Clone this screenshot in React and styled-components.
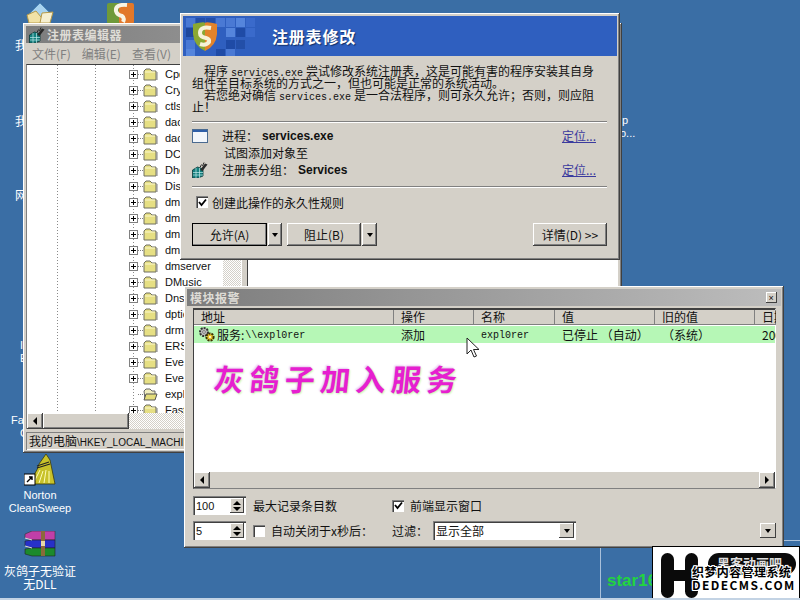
import React from "react";
import styled, { createGlobalStyle } from "styled-components";

const GlobalStyle = createGlobalStyle`
  html, body { margin: 0; padding: 0; background: #3a6ea5; }
  * { box-sizing: border-box; }
  body { font-family: "Noto Sans CJK SC", "Liberation Sans", sans-serif; font-size: 12px; }
`;

const cjk = `"Noto Sans CJK SC", "Liberation Sans", sans-serif`;
const mono = `"Liberation Mono", "Noto Sans CJK SC", monospace`;
const bevelUp = `inset -1px -1px 0 #404040, inset 1px 1px 0 #fff, inset -2px -2px 0 #808080, inset 2px 2px 0 #d4d0c8`;
const hatch = `repeating-conic-gradient(#fff 0 25%, #d4d0c8 0 50%) 0 0 / 2px 2px`;

const treeItems = [
  "Cpqarray", "Crypt32Log", "ctlsx", "dac960nt", "dac2w2k", "DCOM", "Dhcp", "Disk", "dmadmin", "dmboot", "dmio",
  "dmload", "dmserver", "DMusic", "Dnscache", "dptioscsi", "drmkaud", "ERSvc", "EventLog", "EventSystem", "expl0rer", "FastFat",
];

const columns = [
  { title: "地址", width: 200 },
  { title: "操作", width: 80 },
  { title: "名称", width: 81 },
  { title: "值", width: 100 },
  { title: "旧的值", width: 100 },
  { title: "日期", width: 21 },
];

const Desktop = styled.div`
  position: relative;
  width: 800px;
  height: 600px;
  overflow: hidden;
  background: #3a6ea5;
  border-bottom: 2px solid #c3d3e4;
`;

const Spot = styled.div`
  position: absolute;
  left: ${(p) => p.$x}px;
  top: ${(p) => p.$y}px;
`;

const IconLabel = styled.div`
  position: absolute;
  left: ${(p) => p.$x}px;
  top: ${(p) => p.$y}px;
  width: ${(p) => p.$w || 80}px;
  color: #fff;
  font-family: ${(p) => (p.$cjk ? cjk : `"Liberation Sans", "Noto Sans CJK SC", sans-serif`)};
  font-size: ${(p) => (p.$cjk ? 12 : 11)}px;
  line-height: 13px;
  text-align: ${(p) => (p.$center ? "center" : "left")};
  white-space: nowrap;
`;

const StarPanel = styled.div`
  position: absolute;
  left: 600px;
  top: 540px;
  width: 200px;
  height: 60px;
  border-top: 1px solid #a9c0da;
  border-left: 1px solid #a9c0da;
  padding: 30px 0 0 6px;
  color: #22d43f;
  font: bold 17px "Liberation Sans", sans-serif;
`;

const Win = styled.div`
  position: absolute;
  left: ${(p) => p.$x}px;
  top: ${(p) => p.$y}px;
  width: ${(p) => p.$w}px;
  height: ${(p) => p.$h}px;
  padding: 3px;
  display: flex;
  flex-direction: column;
  background: #d4d0c8;
  box-shadow: ${bevelUp};
`;

const TitleBar = styled.div`
  height: 17px;
  flex: none;
  display: flex;
  align-items: center;
  gap: 2px;
  padding: 0 2px 0 3px;
  background: linear-gradient(to right, #7d7d7d, #bdbdbd);
  color: #dedcd6;
  font-weight: 700;
  font-size: 12px;
  line-height: 15px;
  letter-spacing: 0.5px;
`;

const CloseBtn = styled.div`
  margin-left: auto;
  margin-right: 2px;
  width: 11px;
  height: 11px;
  display: flex;
  align-items: center;
  justify-content: center;
  background: #d4d0c8;
  box-shadow: inset -1px -1px 0 #404040, inset 1px 1px 0 #fff;
  color: #111;
  font: 9px/10px "Liberation Sans", sans-serif;
`;

const Menu = styled.div`
  height: 21px;
  flex: none;
  display: flex;
  align-items: center;
  gap: 11px;
  padding-left: 6px;
  color: #808080;
`;

const Panes = styled.div`
  height: 365px;
  flex: none;
  display: flex;
  gap: 5px;
  padding-right: 1px;
`;

const TreePane = styled.div`
  width: 216px;
  display: flex;
  flex-direction: column;
  border-top: 1px solid #404040;
  border-left: 1px solid #808080;
`;

const TreeBody = styled.div`
  flex: 1;
  min-height: 0;
  display: flex;
`;

const TreeView = styled.div`
  flex: 1;
  min-width: 0;
  overflow: hidden;
  padding-top: 1px;
  background-color: #fff;
  background-image:
    repeating-linear-gradient(to bottom, #8a8a8a 0 1px, transparent 1px 3px),
    repeating-linear-gradient(to bottom, #8a8a8a 0 1px, transparent 1px 3px),
    repeating-linear-gradient(to bottom, #8a8a8a 0 1px, transparent 1px 3px);
  background-size: 1px 100%;
  background-position: 30px 0, 68px 0, 106px 0;
  background-repeat: no-repeat;
`;

const TreeRow = styled.div`
  height: 16px;
  display: flex;
  align-items: center;
  padding-left: 102px;
  color: #111;
  font: 11px/16px "Liberation Sans", sans-serif;
  white-space: nowrap;
`;

const Expander = styled.span`
  width: 9px;
  height: 9px;
  flex: none;
  position: relative;
  background: #fff;
  border: 1px solid #808080;
  visibility: ${(p) => (p.$hidden ? "hidden" : "visible")};

  &::before {
    content: "";
    position: absolute;
    left: 1px;
    top: 3px;
    width: 5px;
    height: 1px;
    background: #000;
  }
  &::after {
    content: "";
    position: absolute;
    left: 3px;
    top: 1px;
    width: 1px;
    height: 5px;
    background: #000;
  }
`;

const Connector = styled.span`
  width: 5px;
  flex: none;
  border-top: 1px dotted #808080;
`;

const RowLabel = styled.span`
  margin-left: 7px;
`;

const VScrollTrack = styled.div`
  width: 18px;
  background: ${hatch};
`;

const Gutter = styled.div`
  width: 1px;
  background: #fff;
`;

const HScroll = styled.div`
  height: ${(p) => p.$h || 16}px;
  flex: none;
  display: flex;
  background: ${(p) => (p.$plain ? "#d4d0c8" : hatch)};
`;

const ScrollBtn = styled.div`
  width: ${(p) => p.$w || 16}px;
  flex: none;
  display: flex;
  align-items: center;
  justify-content: center;
  background: #d4d0c8;
  margin-left: ${(p) => (p.$end ? "auto" : "0")};
  box-shadow: inset -1px -1px 0 #404040, inset 1px 1px 0 #fff, inset -2px -2px 0 #808080;
`;

const Arrow = styled.span`
  width: 0;
  height: 0;
  border-top: 4px solid transparent;
  border-bottom: 4px solid transparent;
  border-right: ${(p) => (p.$right ? "0" : "4px solid #000")};
  border-left: ${(p) => (p.$right ? "4px solid #000" : "0")};
`;

const DownTri = styled.span`
  width: 0;
  height: 0;
  border-left: 3px solid transparent;
  border-right: 3px solid transparent;
  border-top: 4px solid #000;
`;

const RightPane = styled.div`
  flex: 1;
  background: #fff;
  box-shadow: inset 1px 1px 0 #404040;
`;

const StatusBar = styled.div`
  height: 18px;
  margin-top: 3px;
  padding-left: 3px;
  flex: none;
  color: #111;
  white-space: nowrap;
  overflow: hidden;
  line-height: 17px;
  font-size: 12px;
  box-shadow: inset 1px 1px 0 #808080, inset -1px -1px 0 #fff;
`;

const StatusPath = styled.span`
  font: 10px "Liberation Sans", sans-serif;
`;

const Banner = styled.div`
  height: 40px;
  flex: none;
  display: flex;
  align-items: center;
  background: #2f5fbf;
`;

const BannerTitle = styled.div`
  margin-left: 10px;
  color: #fff;
  font-size: 16px;
  font-weight: 700;
  letter-spacing: 0.8px;
  text-shadow: 1px 1px 1px #12306a;
`;

const DialogBody = styled.div`
  padding: 9px 10px 0 9px;
  display: flex;
  flex-direction: column;
  color: #111;
`;

const ParaLine = styled.div`
  height: 12px;
  display: flex;
  align-items: baseline;
  font-size: 12px;
  line-height: 12px;
  white-space: pre;
`;

const Latin = styled.span`
  font-family: ${mono};
  font-size: 10px;
  margin: ${(p) => (p.$spaced ? "0 3px" : p.$drop ? "2px 0 0" : "0")};
`;

const Sep = styled.div`
  height: 2px;
  margin-top: ${(p) => p.$top}px;
  background: #808080;
  border-bottom: 1px solid #fff;
`;

const InfoGrid = styled.div`
  margin-top: 4px;
  display: grid;
  grid-template-columns: 30px 1fr auto;
  grid-auto-rows: 17px;
  align-items: center;
  padding-right: 11px;
`;

const InfoText = styled.div`
  grid-column: 2;
  display: flex;
  align-items: center;
  line-height: 14px;
  padding-left: ${(p) => p.$indent || 0}px;
`;

const Strong = styled.span`
  margin-left: 4px;
  font: bold 12px "Liberation Sans", sans-serif;
`;

const LocateLink = styled.a`
  color: #3b3b9e;
  text-decoration: underline;
  font-size: 12px;
  line-height: 14px;
`;

const CheckRow = styled.label`
  margin-top: 7px;
  height: 14px;
  display: flex;
  align-items: center;
  gap: 4px;
  padding-left: 4px;
`;

const CheckBox = styled.span`
  width: 12px;
  height: 12px;
  flex: none;
  display: flex;
  align-items: center;
  justify-content: center;
  background: #fff;
  box-shadow: inset 1px 1px 0 #808080, inset 2px 2px 0 #404040, inset -1px -1px 0 #fff;
`;

const ButtonRow = styled.div`
  margin-top: 14px;
  display: flex;
`;

const Btn = styled.div`
  width: ${(p) => p.$w}px;
  height: 23px;
  margin-left: ${(p) => p.$gap || 0}px;
  display: flex;
  align-items: center;
  justify-content: center;
  background: #d4d0c8;
  box-shadow: ${bevelUp};
  outline: ${(p) => (p.$default ? "1px solid #000" : "none")};
  outline-offset: -1px;
  color: #111;
  font-size: 12px;
`;

const Spacer = styled.div`
  flex: 1;
`;

const ReportBody = styled.div`
  flex: 1;
  min-height: 0;
  padding: 2px 5px 0 6px;
  display: flex;
  flex-direction: column;
`;

const ListBox = styled.div`
  position: relative;
  height: 181px;
  flex: none;
  display: flex;
  flex-direction: column;
  background: #fff;
  border-top: 2px solid #404040;
  border-left: 1px solid #404040;
  border-right: 1px solid #fff;
  border-bottom: 1px solid #808080;
`;

const ListHead = styled.div`
  height: 15px;
  flex: none;
  display: flex;
  background: #d4d0c8;
`;

const HeadCell = styled.div`
  width: ${(p) => p.$w}px;
  flex: none;
  overflow: hidden;
  white-space: nowrap;
  padding-left: 7px;
  line-height: 14px;
  color: #111;
  box-shadow: inset -1px 0 0 #808080, inset 0 -1px 0 #808080;
`;

const ListRow = styled.div`
  height: 17px;
  margin-top: 1px;
  flex: none;
  display: flex;
  align-items: center;
  background: #b6f7b6;
  color: #111;
`;

const Cell = styled.div`
  width: ${(p) => p.$w}px;
  flex: none;
  display: flex;
  align-items: center;
  gap: 1px;
  padding-left: ${(p) => (p.$pad === undefined ? 7 : p.$pad)}px;
  overflow: hidden;
  white-space: nowrap;
  font-size: 12px;
  line-height: 14px;
`;

const ListFill = styled.div`
  flex: 1;
`;

const BigNote = styled.div`
  position: absolute;
  left: 20px;
  top: 50px;
  color: #e61fd0;
  font-family: ${cjk};
  font-size: 30px;
  font-weight: 700;
  letter-spacing: 5.5px;
  line-height: 36px;
  white-space: nowrap;
  transform: skewX(-6deg);
  text-shadow: 1px 1px 2px #c5f5b0, -1px -1px 2px #e9c5f5;
`;

const Controls = styled.div`
  margin-top: 7px;
  display: grid;
  grid-template-columns: 60px 139px 41px 143px 1fr;
  grid-template-rows: 19px 19px;
  row-gap: 6px;
  align-items: center;
`;

const Spin = styled.div`
  width: 53px;
  height: 19px;
  display: flex;
  align-items: center;
  justify-content: space-between;
  padding: 0 2px 0 3px;
  background: #fff;
  box-shadow: inset 1px 1px 0 #808080, inset 2px 2px 0 #404040, inset -1px -1px 0 #fff;
  font: 11px "Liberation Sans", sans-serif;
  color: #111;
`;

const SpinBtns = styled.div`
  width: 14px;
  height: 15px;
  display: flex;
  flex-direction: column;
  align-items: center;
  justify-content: center;
  gap: 2px;
  background: #d4d0c8;
  box-shadow: inset -1px -1px 0 #404040, inset 1px 1px 0 #fff;

  &::before {
    content: "";
    border-left: 4px solid transparent;
    border-right: 4px solid transparent;
    border-bottom: 4px solid #000;
  }
  &::after {
    content: "";
    border-left: 4px solid transparent;
    border-right: 4px solid transparent;
    border-top: 4px solid #000;
  }
`;

const Ctl = styled.div`
  display: flex;
  align-items: center;
  gap: ${(p) => p.$gap || 0}px;
  grid-column: ${(p) => p.$col};
  color: #111;
  white-space: nowrap;
  line-height: 14px;
`;

const Combo = styled.div`
  height: 19px;
  display: flex;
  align-items: center;
  justify-content: space-between;
  padding: 0 2px 0 3px;
  background: #fff;
  box-shadow: inset 1px 1px 0 #808080, inset 2px 2px 0 #404040, inset -1px -1px 0 #fff;
  color: #111;
  line-height: 14px;
`;

const ComboBtn = styled.div`
  width: ${(p) => p.$w || 15}px;
  height: 15px;
  margin-left: ${(p) => (p.$end ? "auto" : "0")};
  display: flex;
  align-items: center;
  justify-content: center;
  background: #d4d0c8;
  box-shadow: inset -1px -1px 0 #404040, inset 1px 1px 0 #fff;
`;

const Watermark = styled.div`
  position: absolute;
  left: 652px;
  top: 546px;
  width: 148px;
  height: 54px;
  background: #fff;
  border: 1px solid #000;
  overflow: hidden;
`;

const Pill = styled.div`
  position: absolute;
  left: 55px;
  top: 6px;
  width: 88px;
  height: 22px;
  border-radius: 11px;
  background: #0a0a0a;
  color: #ddd;
  padding-left: 9px;
  font-size: 13px;
  font-weight: 700;
  line-height: 20px;
  white-space: nowrap;
  overflow: hidden;
`;

const MarkLine = styled.div`
  position: absolute;
  left: 39px;
  top: ${(p) => p.$y}px;
  color: #000;
  font-family: ${cjk};
  font-size: ${(p) => p.$size}px;
  font-weight: 700;
  line-height: 14px;
  letter-spacing: ${(p) => p.$ls}px;
  white-space: nowrap;
  text-shadow: 1px 0 0 #fff, -1px 0 0 #fff, 0 1px 0 #fff, 0 -1px 0 #fff, 1px 1px 0 #fff, -1px -1px 0 #fff, 1px -1px 0 #fff, -1px 1px 0 #fff;
`;

function Folder({ open }) {
  return (
    <svg width="15" height="13" viewBox="0 0 15 13" style={{ flex: "none" }}>
      {open ? (
        <>
          <path d="M1 3 L3 1 H7 L9 3 H12 V11 H2 Z" fill="#f2efc0" stroke="#666" />
          <path d="M3 6 H14 L12 12 H1 Z" fill="#e3dc7a" stroke="#555" />
        </>
      ) : (
        <>
          <path d="M1 3 L3 1 H7 L9 3 H13 V12 H1 Z" fill="#e6df83" stroke="#6f6f60" />
          <path d="M2 4 H12" stroke="#fbf8cf" />
          <path d="M14 4 V12" stroke="#808080" />
        </>
      )}
    </svg>
  );
}

function RegIcon({ size = 16 }) {
  return (
    <svg width={size} height={size} viewBox="0 0 16 16" style={{ flex: "none" }}>
      <path d="M0.5 8 L5.5 5 L11 7 V14 L6 16 H0.5 Z" fill="#14807e" stroke="#0b3a3a" strokeWidth="0.8" />
      <path d="M1 10.5 H11 M1 13 H11 M4 6 V16 M7.5 6 V16" stroke="#bfeaea" strokeWidth="0.7" />
      <path d="M8 8 L13 1.5 L15.5 2.5 L10.5 9 Z" fill="#2b2b2b" />
      <path d="M12 0.5 L10.5 4 M9.5 2.5 L8 5.5" stroke="#2b2b2b" />
    </svg>
  );
}

function ShieldS({ width = 26, height = 30 }) {
  return (
    <svg width={width} height={height} viewBox="0 0 26 30">
      <path d="M1 2 Q13 -1 13 1 V29 Q2 24 1 12 Z" fill="#8aa832" />
      <path d="M13 1 Q14 -1 25 2 V12 Q24 24 13 29 Z" fill="#e2832a" />
      <path d="M19 6 Q8 4 8 11 Q8 15 14 16 Q18 17 17 20 Q14 24 8 22" fill="none" stroke="#f6f2d8" strokeWidth="4" />
    </svg>
  );
}

function SquareS() {
  return (
    <svg width="27" height="21" viewBox="0 0 27 21">
      <rect x="0" y="0" width="13" height="21" rx="2" fill="#6f9a3a" />
      <rect x="12" y="0" width="15" height="21" rx="2" fill="#e2782a" />
      <path d="M20 2 Q8 1 9 8 Q10 12 15 13 Q18 15 16 19" fill="none" stroke="#f8f4e4" strokeWidth="4" />
    </svg>
  );
}

const bannerBlocks = [
  [3, 2, "#4a79d4"], [13, 2, "#234fa8"], [23, 2, "#234fa8"], [33, 2, "#4a79d4"], [43, 2, "#4a79d4"], [53, 2, "#5585dc"], [63, 2, "#3a6acb"],
  [3, 12, "#1f489c"], [43, 12, "#5585dc"], [53, 12, "#1f4ba6"], [63, 12, "#3a6acb"],
  [3, 24, "#4a79d4"], [43, 24, "#1f4ba6"], [53, 24, "#234fa8"],
  [3, 33, "#5585dc"], [33, 33, "#1f4ba6"], [43, 33, "#4a79d4"],
];

function BannerArt() {
  return (
    <svg width="79" height="40" viewBox="0 0 79 40" style={{ flex: "none" }}>
      {bannerBlocks.map(([x, y, c], i) => (
        <rect key={i} x={x} y={y} width="9" height="9" fill={c} />
      ))}
      <g transform="translate(9 6)">
        <ShieldS />
      </g>
    </svg>
  );
}

function GearIcon() {
  return (
    <svg width="18" height="17" viewBox="0 0 18 17" style={{ flex: "none" }}>
      <circle cx="6" cy="6" r="4" fill="#bdbdbd" stroke="#333" strokeWidth="2" strokeDasharray="2 1" />
      <circle cx="6" cy="6" r="1.3" fill="#fff" stroke="#333" strokeWidth="0.6" />
      <circle cx="12" cy="11" r="3.6" fill="#e5c22e" stroke="#3c3000" strokeWidth="2" strokeDasharray="2 1" />
      <circle cx="12" cy="11" r="1" fill="#fff" />
    </svg>
  );
}

function WindowIcon() {
  return (
    <svg width="16" height="14" viewBox="0 0 16 14" style={{ flex: "none" }}>
      <rect x="0.5" y="0.5" width="15" height="13" fill="#f2f6fb" stroke="#4a6a90" />
      <rect x="1" y="1" width="14" height="2" fill="#2f5fa8" />
    </svg>
  );
}

function Tick() {
  return (
    <svg width="9" height="9" viewBox="0 0 9 9">
      <path d="M1 4 L3.5 7 L8 1.5" fill="none" stroke="#000" strokeWidth="1.8" />
    </svg>
  );
}

function Cursor() {
  return (
    <svg width="14" height="22" viewBox="0 0 14 22">
      <path d="M1 1 V17 L5 13 L8 20 L10.5 19 L7.5 12.5 H13 Z" fill="#fff" stroke="#222" strokeWidth="1" />
    </svg>
  );
}

function MailIcon() {
  return (
    <svg width="28" height="20" viewBox="0 0 28 20">
      <path d="M14 0 L24 10 L14 20 L4 10 Z" fill="#a9d3ef" stroke="#4d86b5" />
      <path d="M1 12 L10 8 L20 20 H3 Z" fill="#f1e2a6" stroke="#b69a4a" />
      <path d="M16 10 L27 9 L24 20 H14 Z" fill="#f6efd0" stroke="#b69a4a" />
    </svg>
  );
}

function SweepIcon() {
  return (
    <svg width="34" height="32" viewBox="0 0 34 32">
      <path d="M22 0 L26 6 L31 30 H1 Q12 22 15 10 Z" fill="#c8c22a" stroke="#3c3a08" strokeWidth="0.8" />
      <path d="M13 12 L25 8 M13 14 L26 10" stroke="#222" strokeWidth="1.2" />
      <path d="M10 28 L16 16 M15 29 L19 17 M20 29 L22 16 M25 29 L25 17" stroke="#fdfbb8" />
      <rect x="0" y="20" width="11" height="11" fill="#fff" stroke="#000" />
      <path d="M3 28 L8 23 M5 23 H8 V26" stroke="#000" strokeWidth="1.4" fill="none" />
    </svg>
  );
}

function RarIcon() {
  return (
    <svg width="32" height="26" viewBox="0 0 32 26">
      <path d="M1 3 L8 0 H31 V9 H8 L1 7 Z" fill="#c03fa8" stroke="#333" strokeWidth="0.6" />
      <path d="M1 10 L8 9 H31 V17 H8 L1 15 Z" fill="#2730c8" stroke="#222" strokeWidth="0.6" />
      <path d="M1 18 L8 17 H31 V25 H8 L1 23 Z" fill="#1c8a2c" stroke="#222" strokeWidth="0.6" />
      <path d="M1 7 L8 9 M1 15 L8 17" stroke="#ddd" />
      <rect x="17" y="0" width="4" height="25" fill="#8a6a3a" />
      <rect x="17" y="10" width="4" height="5" fill="#e6d9a8" />
    </svg>
  );
}

function HLogo() {
  return (
    <svg width="40" height="46" viewBox="0 0 40 46">
      <rect x="0" y="0" width="13" height="45" rx="6.5" fill="#0a0a0a" />
      <rect x="24" y="0" width="13" height="45" rx="6.5" fill="#0a0a0a" />
      <rect x="10" y="17" width="16" height="11" fill="#0a0a0a" />
    </svg>
  );
}

function RegistryWindow() {
  return (
    <Win $x={23} $y={23} $w={599} $h={430}>
      <TitleBar>
        <RegIcon />
        注册表编辑器
      </TitleBar>
      <Menu>
        <span>文件(F)</span>
        <span>编辑(E)</span>
        <span>查看(V)</span>
      </Menu>
      <Panes>
        <TreePane>
          <TreeBody>
            <TreeView>
              {treeItems.map((name, i) => (
                <TreeRow key={i}>
                  <Expander $hidden={name === "expl0rer"} />
                  <Connector />
                  <Folder open={name === "expl0rer"} />
                  <RowLabel>{name}</RowLabel>
                </TreeRow>
              ))}
            </TreeView>
            <VScrollTrack />
            <Gutter />
          </TreeBody>
          <HScroll>
            <ScrollBtn>
              <Arrow />
            </ScrollBtn>
            <ScrollBtn $w={86} />
          </HScroll>
        </TreePane>
        <RightPane />
      </Panes>
      <StatusBar>
        我的电脑<StatusPath>\HKEY_LOCAL_MACHINE\SYSTEM\ControlSet001\Services\expl0rer</StatusPath>
      </StatusBar>
    </Win>
  );
}

function ModifyDialog() {
  return (
    <Win $x={180} $y={13} $w={440} $h={247}>
      <Banner>
        <BannerArt />
        <BannerTitle>注册表修改</BannerTitle>
      </Banner>
      <DialogBody>
        <ParaLine>
          {"\u3000"}程序<Latin $spaced>services.exe</Latin>尝试修改系统注册表，这是可能有害的程序安装其自身
        </ParaLine>
        <ParaLine>组件至目标系统的方式之一，但也可能是正常的系统活动。</ParaLine>
        <ParaLine>
          {"\u3000"}若您绝对确信<Latin $spaced>services.exe</Latin>是一合法程序，则可永久允许；否则，则应阻
        </ParaLine>
        <ParaLine>止！</ParaLine>
        <Sep $top={8} />
        <InfoGrid>
          <WindowIcon />
          <InfoText>
            进程：<Strong>services.exe</Strong>
          </InfoText>
          <LocateLink>定位...</LocateLink>
          <InfoText $indent={2}>试图添加对象至</InfoText>
          <span />
          <RegIcon />
          <InfoText>
            注册表分组：<Strong>Services</Strong>
          </InfoText>
          <LocateLink>定位...</LocateLink>
        </InfoGrid>
        <Sep $top={8} />
        <CheckRow>
          <CheckBox>
            <Tick />
          </CheckBox>
          创建此操作的永久性规则
        </CheckRow>
        <ButtonRow>
          <Btn $w={75} $default>
            允许(A)
          </Btn>
          <Btn $w={14} $gap={1}>
            <DownTri />
          </Btn>
          <Btn $w={74} $gap={5}>
            阻止(B)
          </Btn>
          <Btn $w={15} $gap={1}>
            <DownTri />
          </Btn>
          <Spacer />
          <Btn $w={74}>详情(D) &gt;&gt;</Btn>
        </ButtonRow>
      </DialogBody>
    </Win>
  );
}

function ReportWindow() {
  return (
    <Win $x={184} $y={286} $w={600} $h={262}>
      <TitleBar>
        模块报警
        <CloseBtn>×</CloseBtn>
      </TitleBar>
      <ReportBody>
        <ListBox>
          <ListHead>
            {columns.map((c) => (
              <HeadCell key={c.title} $w={c.width}>
                {c.title}
              </HeadCell>
            ))}
          </ListHead>
          <ListRow>
            <Cell $w={200} $pad={4}>
              <GearIcon />
              服务:<Latin $drop>\\expl0rer</Latin>
            </Cell>
            <Cell $w={80}>添加</Cell>
            <Cell $w={81}>
              <Latin $drop>expl0rer</Latin>
            </Cell>
            <Cell $w={100}>已停止 （自动）</Cell>
            <Cell $w={100}>（系统）</Cell>
            <Cell $w={21} $pad={7}>
              2005
            </Cell>
          </ListRow>
          <ListFill />
          <HScroll $plain>
            <ScrollBtn>
              <Arrow />
            </ScrollBtn>
            <ScrollBtn $end>
              <Arrow $right />
            </ScrollBtn>
          </HScroll>
          <BigNote>灰鸽子加入服务</BigNote>
        </ListBox>
        <Controls>
          <Spin>
            100
            <SpinBtns />
          </Spin>
          <Ctl $col="2">最大记录条目数</Ctl>
          <Ctl $col="3 / 6" $gap={6}>
            <CheckBox>
              <Tick />
            </CheckBox>
            前端显示窗口
          </Ctl>
          <Spin>
            5
            <SpinBtns />
          </Spin>
          <Ctl $col="2" $gap={6}>
            <CheckBox />
            自动关闭于x秒后：
          </Ctl>
          <Ctl $col="3">过滤：</Ctl>
          <Combo>
            显示全部
            <ComboBtn>
              <DownTri />
            </ComboBtn>
          </Combo>
          <ComboBtn $end $w={16}>
            <DownTri />
          </ComboBtn>
        </Controls>
      </ReportBody>
    </Win>
  );
}

export default function App() {
  return (
    <Desktop>
      <GlobalStyle />
      <Spot $x={26} $y={3}>
        <MailIcon />
      </Spot>
      <Spot $x={107} $y={3}>
        <SquareS />
      </Spot>
      <IconLabel $cjk $x={15} $y={38}>我的文档</IconLabel>
      <IconLabel $cjk $x={15} $y={114}>我的电脑</IconLabel>
      <IconLabel $cjk $x={15} $y={188}>网上邻居</IconLabel>
      <IconLabel $x={20} $y={339}>Internet</IconLabel>
      <IconLabel $x={20} $y={352}>Explorer</IconLabel>
      <IconLabel $x={11} $y={414}>FastStone</IconLabel>
      <IconLabel $x={20} $y={427}>Capture</IconLabel>
      <IconLabel $x={622} $y={114}>p</IconLabel>
      <IconLabel $x={620} $y={127}>o...</IconLabel>
      <Spot $x={24} $y={454}>
        <SweepIcon />
      </Spot>
      <IconLabel $x={0} $y={489} $center>
        Norton
        <br />
        CleanSweep
      </IconLabel>
      <Spot $x={24} $y={531}>
        <RarIcon />
      </Spot>
      <IconLabel $cjk $x={0} $y={564} $center>
        灰鸽子无验证
        <br />
        无DLL
      </IconLabel>
      <StarPanel>star1688</StarPanel>
      <RegistryWindow />
      <ModifyDialog />
      <ReportWindow />
      <Spot $x={466} $y={337}>
        <Cursor />
      </Spot>
      <Watermark>
        <Spot $x={8} $y={6}>
          <HLogo />
        </Spot>
        <Pill>黑客动画吧</Pill>
        <MarkLine $y={18} $size={12} $ls={0.4}>
          织梦内容管理系统
        </MarkLine>
        <MarkLine $y={31} $size={12} $ls={1.4}>
          DEDECMS.COM
        </MarkLine>
      </Watermark>
    </Desktop>
  );
}
